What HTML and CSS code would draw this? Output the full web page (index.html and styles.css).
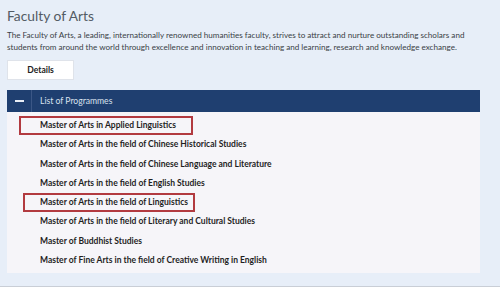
FILE: index.html
```html
<!DOCTYPE html>
<html lang="en">
<head>
<meta charset="utf-8">
<title>Faculty of Arts</title>
<link rel="stylesheet" href="styles.css">
</head>
<body>
<main class="page">
  <h1 class="title">Faculty of Arts</h1>
  <p class="intro">The Faculty of Arts, a leading, internationally renowned humanities faculty, strives to attract and nurture outstanding scholars and students from around the world through excellence and innovation in teaching and learning, research and knowledge exchange.</p>
  <button class="details" type="button">Details</button>
  <section class="accordion">
    <div class="acc-head">
      <span class="acc-toggle"><span class="minus"></span></span>
      <span class="acc-title">List of Programmes</span>
    </div>
    <ul class="acc-body">
      <li class="item mark-a">Master of Arts in Applied Linguistics</li>
      <li class="item">Master of Arts in the field of Chinese Historical Studies</li>
      <li class="item">Master of Arts in the field of Chinese Language and Literature</li>
      <li class="item">Master of Arts in the field of English Studies</li>
      <li class="item mark-b">Master of Arts in the field of Linguistics</li>
      <li class="item">Master of Arts in the field of Literary and Cultural Studies</li>
      <li class="item">Master of Buddhist Studies</li>
      <li class="item">Master of Fine Arts in the field of Creative Writing in English</li>
    </ul>
  </section>
  <div class="rule"></div>
</main>
</body>
</html>
```
FILE: styles.css
```css
html, body {
  margin: 0;
  padding: 0;
}
body {
  background: #e7eef8;
  font-family: Lato, "Noto Sans", sans-serif;
  width: 500px;
  height: 287px;
  overflow: hidden;
}
.page {
  padding: 0 20px 0 7px;
}
.title {
  margin: 0;
  padding-top: 6px;
  font-size: 13.8px;
  line-height: 20px;
  font-weight: 400;
  color: #535b64;
}
.intro {
  margin: 3px 0 0;
  font-size: 8.1px;
  line-height: 12px;
  color: #3a3f46;
}
.details {
  display: block;
  margin-top: 7px;
  width: 67px;
  height: 20px;
  padding: 0;
  background: #ffffff;
  border: 1px solid #dfe3ea;
  font-family: inherit;
  font-size: 8.6px;
  font-weight: 700;
  color: #222;
}
.accordion {
  margin-top: 10px;
  width: 473px;
}
.acc-head {
  display: flex;
  align-items: center;
  height: 22px;
  background: #1f3f70;
}
.acc-toggle {
  display: flex;
  align-items: center;
  justify-content: center;
  width: 24px;
  height: 22px;
  border-right: 1px solid #3b5786;
}
.minus {
  display: block;
  width: 9px;
  height: 2px;
  background: #e8edf5;
}
.acc-title {
  padding-left: 8px;
  font-size: 8.6px;
  color: #d9e1ee;
}
.acc-body {
  list-style: none;
  margin: 0;
  padding: 4px 0 3px;
  background: #f6f5f9;
}
.item {
  position: relative;
  height: 19.3px;
  line-height: 19.3px;
  padding-left: 33px;
  font-size: 8.5px;
  font-weight: 700;
  color: #1f1f1f;
}
.mark-a::before,
.mark-b::before {
  content: "";
  position: absolute;
  top: 0;
  height: 15px;
  border: 2px solid #b23a40;
}
.mark-a::before {
  left: 12px;
  width: 170px;
}
.mark-b::before {
  left: 16px;
  width: 168px;
}
.rule {
  margin-top: 13px;
  margin-left: -7px;
  width: 500px;
  height: 1px;
  background: #c9ced6;
}
```
